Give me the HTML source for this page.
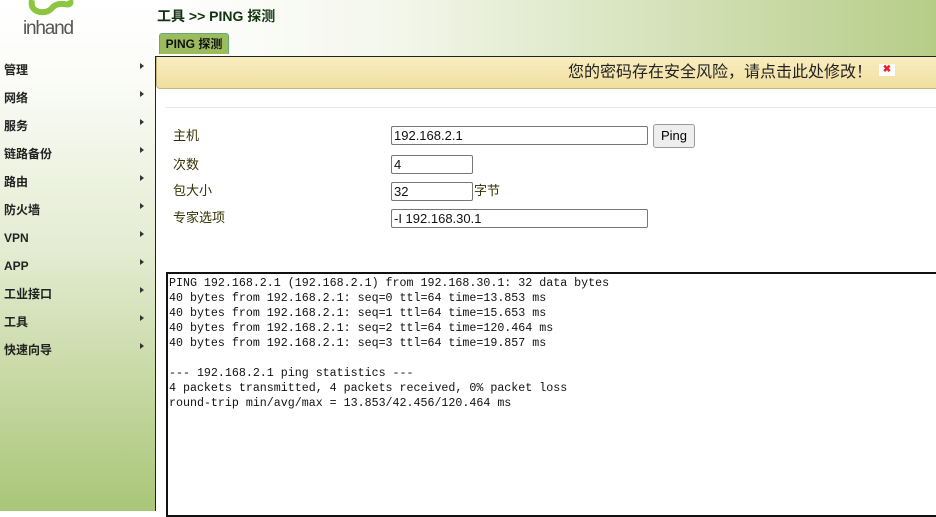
<!DOCTYPE html>
<html><head><meta charset="utf-8"><style>
body{margin:0;width:936px;height:511px;overflow:hidden;position:relative;font-family:"Liberation Sans","Noto Sans CJK SC",sans-serif;background:#fff}
#side{position:absolute;left:0;top:0;width:155px;height:511px;background:linear-gradient(#fff 0%,#fbfcf8 15%,#e3ebd0 50%,#a9c677 100%)}
#side .it{position:absolute;left:4px;font-size:12px;line-height:14px;font-weight:bold;color:#222}
#side .ar{position:absolute;left:140px;width:0;height:0;border-left:4px solid #333;border-top:3.5px solid transparent;border-bottom:3.5px solid transparent}
#top{position:absolute;left:155px;top:0;width:781px;height:57px;background:linear-gradient(90deg,#fff 0%,#f4f7ec 30%,#b6cd88 100%)}
#vline{position:absolute;left:155px;top:56px;width:1px;height:455px;background:#222}
#hline{position:absolute;left:155px;top:56px;width:781px;height:1px;background:#222}
.title{position:absolute;left:157px;top:7px;font-size:14px;line-height:18px;font-weight:bold;color:#113311}
.tab{position:absolute;left:159px;top:33px;width:68px;height:20px;background:#9bbb5c;border:1px solid #6a7;border-bottom:none;border-radius:3px 3px 0 0;font-size:12px;font-weight:bold;color:#111;line-height:20px;text-align:center}
#warn{position:absolute;left:156px;top:57px;width:780px;height:31px;background:linear-gradient(#f9edc0,#f1dfa0);border-bottom:1px solid #c8b578;border-left:1px solid #c8b578;border-radius:0 0 0 4px}
#warn span{position:absolute;left:411px;top:6px;font-size:16px;line-height:20px;color:#222}
#warn b{position:absolute;left:722px;top:7px;width:16px;height:12px;background:#fff;color:#e22;font-size:10px;text-align:center;line-height:12px}
#sep{position:absolute;left:166px;top:107px;width:770px;height:1px;background:#e6e6e6}
.lb{position:absolute;left:173px;font-size:13px;line-height:16px;color:#333300}
.in{position:absolute;left:391px;height:19px;border:1px solid #777;border-radius:2px;font-size:13px;line-height:17px;padding-left:2px;box-sizing:border-box;color:#111}
#btn{position:absolute;left:653px;top:124px;width:42px;height:24px;border:1px solid #999;border-radius:3px;background:#eee;font-size:13px;text-align:center;line-height:22px;box-sizing:border-box}
#out{position:absolute;left:166px;top:272px;width:772px;height:245px;border:2px solid #111;box-sizing:border-box;font-family:"Liberation Mono",monospace;font-size:11.65px;line-height:15px;padding:2px 0 0 1px;white-space:pre;color:#111}
</style></head><body>
<div id="side">
<svg style="position:absolute;left:22px;top:0" width="60" height="42" viewBox="0 0 60 42">
<path d="M10 0 Q8 10 18 12 Q26 13 30 8 Q34 3 42 4 Q50 6 48 0" fill="none" stroke="#8cc63f" stroke-width="6"/>
<text x="1" y="34" font-family="Liberation Sans,sans-serif" font-size="19" fill="#555" letter-spacing="-1.2">inhand</text>
</svg>
<div class="it" style="top:63px">管理</div><div class="ar" style="top:63px"></div>
<div class="it" style="top:91px">网络</div><div class="ar" style="top:91px"></div>
<div class="it" style="top:119px">服务</div><div class="ar" style="top:119px"></div>
<div class="it" style="top:147px">链路备份</div><div class="ar" style="top:147px"></div>
<div class="it" style="top:175px">路由</div><div class="ar" style="top:175px"></div>
<div class="it" style="top:203px">防火墙</div><div class="ar" style="top:203px"></div>
<div class="it" style="top:231px">VPN</div><div class="ar" style="top:231px"></div>
<div class="it" style="top:259px">APP</div><div class="ar" style="top:259px"></div>
<div class="it" style="top:287px">工业接口</div><div class="ar" style="top:287px"></div>
<div class="it" style="top:315px">工具</div><div class="ar" style="top:315px"></div>
<div class="it" style="top:343px">快速向导</div><div class="ar" style="top:343px"></div>
</div>
<div id="top"></div>
<div class="title">工具 &gt;&gt; PING 探测</div>
<div class="tab">PING 探测</div>
<div id="hline"></div><div id="vline"></div>
<div id="warn"><span>您的密码存在安全风险，请点击此处修改！</span><b>✖</b></div>
<div id="sep"></div>
<div class="lb" style="top:128px">主机</div>
<div class="lb" style="top:157px">次数</div>
<div class="lb" style="top:183px">包大小</div>
<div class="lb" style="top:210px">专家选项</div>
<div class="in" style="top:126px;width:257px">192.168.2.1</div>
<div class="in" style="top:155px;width:82px">4</div>
<div class="in" style="top:182px;width:82px">32</div>
<div class="lb" style="left:474px;top:183px">字节</div>
<div class="in" style="top:209px;width:257px">-I 192.168.30.1</div>
<div id="btn">Ping</div>
<div id="out">PING 192.168.2.1 (192.168.2.1) from 192.168.30.1: 32 data bytes
40 bytes from 192.168.2.1: seq=0 ttl=64 time=13.853 ms
40 bytes from 192.168.2.1: seq=1 ttl=64 time=15.653 ms
40 bytes from 192.168.2.1: seq=2 ttl=64 time=120.464 ms
40 bytes from 192.168.2.1: seq=3 ttl=64 time=19.857 ms

--- 192.168.2.1 ping statistics ---
4 packets transmitted, 4 packets received, 0% packet loss
round-trip min/avg/max = 13.853/42.456/120.464 ms</div>
</body></html>
